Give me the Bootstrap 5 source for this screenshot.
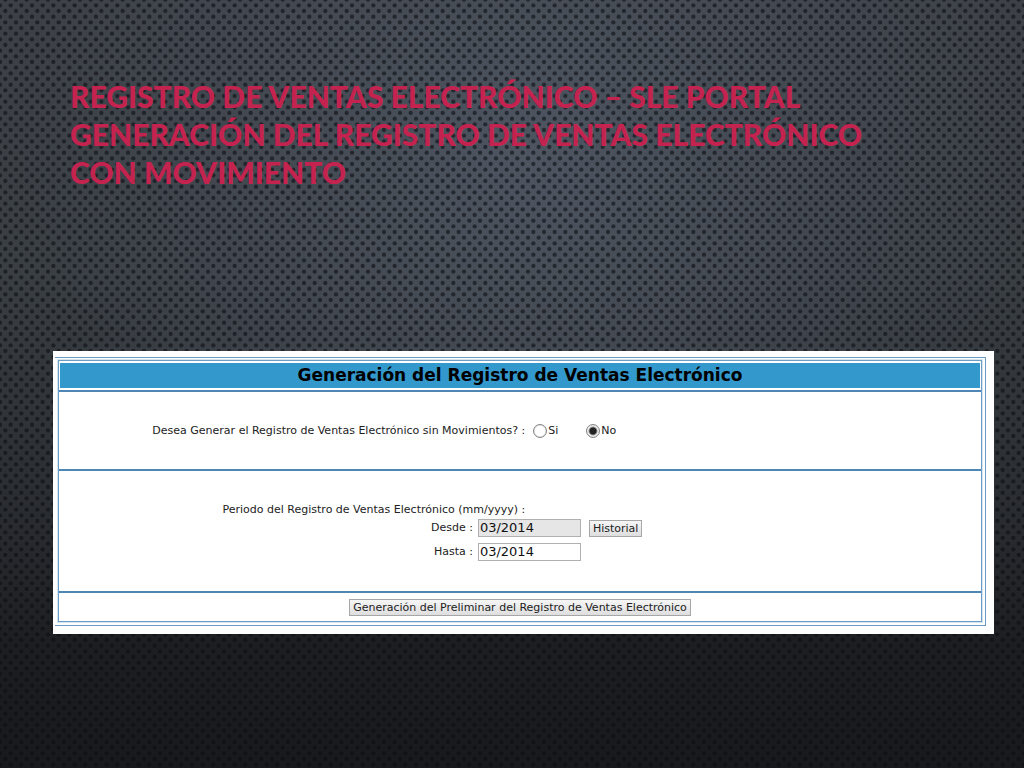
<!DOCTYPE html>
<html lang="es">
<head>
<meta charset="utf-8">
<meta name="viewport" content="width=device-width, initial-scale=1">
<title>Registro de Ventas Electrónico</title>
<link href="https://cdn.jsdelivr.net/npm/bootstrap@5.3.0/dist/css/bootstrap.min.css" rel="stylesheet">
<style>
body { background: radial-gradient(ellipse 50% 60% at 52% 20%, #4e5561 0%, #484e58cc 40%, #3d424900 100%), linear-gradient(#3d4147 0%, #3a3f44 35%, #2a2e32 65%, #1d1e22 84%, #18191c 100%); font-family: "DejaVu Sans", sans-serif; color: #222; }
.mesh { z-index: -1; }
.slide-title { padding: 77px 40px 0 70px; margin-bottom: 160px; font: 900 30px/38px Lato, sans-serif; color: #c4234f; text-transform: uppercase; }
.sheet { margin: 0 30px 0 53px; padding: 6px 8px 8px 2px; }
.frame { border: 1px solid #6a9cc5; border-left: 0; padding: 2px 3px 3px; }
.inner { border: 1px solid #6a9cc5; outline: 1px solid #d3e5f0; font-size: 11px; line-height: 18px; }
.band { margin: 2px 1px; background: #3398cc; font-size: 17px; line-height: 25px; color: #000; }
.part { border-top: 2px solid #4f87b4; }
.ask { padding: 30px 0 29px; }
.period { padding: 30px 0; }
.cap { width: 51%; text-align: right; padding-right: 4px; }
.cap-s { width: 45%; text-align: right; padding-right: 1px; }
.choice { appearance: none; width: 14px; height: 14px; margin: 0 1px 0 0; border: 1px solid #858585; border-radius: 50%; background: #fff; box-shadow: inset 0 0 1px #888; }
.choice:checked { background: radial-gradient(circle, #222 0 3px, #fff 5px); }
.date { width: 103px; height: 18px; padding: 0 1px; border: 1px solid #b0b0b0; font-size: 13px; color: #111; background: #fff; }
.date[readonly] { background: #e6e6e6; }
.push { height: 17px; padding: 0 3px; border: 1px solid #a6a6a6; background: linear-gradient(#f6f6f6, #dedede); font-size: 11px; line-height: 15px; color: #222; }
.row-gap { gap: 6px; }
.send { padding: 6px 0 5px; }
</style>
</head>
<body class="position-relative min-vh-100">
<svg class="mesh position-absolute top-0 start-0 w-100 h-100" aria-hidden="true">
  <defs><pattern id="holes" width="32" height="34" viewBox="0 0 96 102" patternUnits="userSpaceOnUse">
    <g fill="#0b0e13" fill-opacity=".6">
      <g id="pair"><circle cx="0" cy="16" r="6.5"/><circle cx="32" cy="16" r="6.5"/><circle cx="64" cy="16" r="6.5"/><circle cx="96" cy="16" r="6.5"/><circle cx="16" cy="33" r="6.5"/><circle cx="48" cy="33" r="6.5"/><circle cx="80" cy="33" r="6.5"/></g>
      <use href="#pair" y="-34"/><use href="#pair" y="34"/><use href="#pair" y="68"/>
    </g></pattern></defs>
  <rect width="100%" height="100%" fill="url(#holes)"/>
</svg>
<h1 class="slide-title">Registro de Ventas Electrónico – SLE Portal<br>Generación del Registro de Ventas Electrónico<br>con movimiento</h1>
<main class="sheet bg-white">
  <div class="frame">
    <form class="inner" onsubmit="return false">
      <h2 class="band text-center fw-bold">Generación del Registro de Ventas Electrónico</h2>
      <fieldset class="part ask d-flex align-items-center">
        <div class="cap">Desea Generar el Registro de Ventas Electrónico sin Movimientos? :</div>
        <div class="d-flex align-items-center ms-1 me-4"><input class="choice" type="radio" name="mov" id="si"><label for="si">Si</label></div>
        <div class="d-flex align-items-center ms-1"><input class="choice" type="radio" name="mov" id="no" checked><label for="no">No</label></div>
      </fieldset>
      <fieldset class="part period">
        <div class="cap">Periodo del Registro de Ventas Electrónico (mm/yyyy) :</div>
        <div class="d-flex flex-column row-gap">
          <div class="d-flex align-items-center"><label class="cap-s" for="desde">Desde :</label><input class="date ms-1" id="desde" value="03/2014" readonly><button type="button" class="push ms-2">Historial</button></div>
          <div class="d-flex align-items-center"><label class="cap-s" for="hasta">Hasta :</label><input class="date ms-1" id="hasta" value="03/2014"></div>
        </div>
      </fieldset>
      <div class="part send d-flex justify-content-center"><button type="submit" class="push">Generación del Preliminar del Registro de Ventas Electrónico</button></div>
    </form>
  </div>
</main>
<script src="https://cdn.jsdelivr.net/npm/bootstrap@5.3.0/dist/js/bootstrap.bundle.min.js"></script>
</body>
</html>
